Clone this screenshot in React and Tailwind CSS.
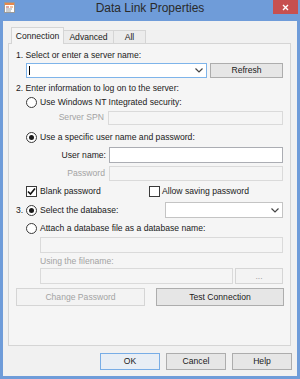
const font = { fontFamily: '"Liberation Sans", Arial, sans-serif' };

function Radio({ checked }) {
  return (
    <span className="w-[11px] h-[11px] rounded-full border border-[#3a3a3a] bg-white flex items-center justify-center shrink-0">
      {checked && <span className="w-[5px] h-[5px] rounded-full bg-[#1a1a1a]" />}
    </span>
  );
}

function Checkbox({ checked }) {
  return (
    <span className="w-[11px] h-[11px] border border-[#3a3a3a] bg-white flex items-center justify-center shrink-0">
      {checked && (
        <svg width="9" height="9" viewBox="0 0 9 9">
          <polyline points="1,4.5 3.5,7 8,1.5" fill="none" stroke="#111" strokeWidth="1.6" />
        </svg>
      )}
    </span>
  );
}

function Chevron() {
  return (
    <svg width="8" height="5" viewBox="0 0 8 5" className="shrink-0">
      <polyline points="0.5,0.5 4,4 7.5,0.5" fill="none" stroke="#444" strokeWidth="1.2" />
    </svg>
  );
}

function Button({ children, disabled, primary, className = '' }) {
  let tone = 'border-[#adadad] bg-[#e6e6e6] text-[#1a1a1a]';
  if (disabled) tone = 'border-[#d5d5d5] bg-[#f3f3f3] text-[#a3a3a3]';
  if (primary) tone = 'border-[#78ade6] bg-[#e8eef5] text-[#1a1a1a]';
  return (
    <div className={`border flex items-center justify-center leading-[13px] ${tone} ${className}`}>
      {children}
    </div>
  );
}

function TitleIcon() {
  return (
    <svg width="11" height="11" viewBox="0 0 11 11">
      <rect x="0.5" y="0.5" width="10" height="10" fill="#ffffff" stroke="#9a9a9a" />
      <rect x="1" y="1" width="9" height="2" fill="#e8874a" />
      <rect x="2" y="4.5" width="3" height="1" fill="#c0504d" />
      <rect x="2" y="6.5" width="6" height="1" fill="#a0a0a0" />
      <rect x="2" y="8.5" width="5" height="1" fill="#a0a0a0" />
      <rect x="6" y="4.5" width="3" height="1" fill="#e8874a" />
    </svg>
  );
}

export default function App() {
  return (
    <div
      className="w-[300px] h-[379px] bg-[#6f9cd9] flex flex-col text-[8.6px] text-[#1a1a1a] overflow-hidden"
      style={font}
    >
      {/* Title bar */}
      <div className="h-[21px] shrink-0 grid grid-cols-[1fr_auto_1fr]">
        <div className="pl-[4px] pt-[2px]">
          <TitleIcon />
        </div>
        <span className="text-[12px] leading-[14px] mt-[1px] text-[#2a2a2a]">Data Link Properties</span>
        <div className="flex justify-end pr-[2px]">
          <div className="w-[25px] h-[14px] bg-[#c75050] flex items-center justify-center">
            <svg width="7" height="7" viewBox="0 0 7 7">
              <path d="M1 1 L6 6 M6 1 L1 6" stroke="#fff" strokeWidth="1.4" />
            </svg>
          </div>
        </div>
      </div>

      {/* Client area */}
      <div className="flex-1 mx-[3px] mb-[3px] bg-[#f1f1f1] flex flex-col">
        {/* Tabs */}
        <div className="mt-[6px] h-[17px] -mb-px relative z-10 flex items-end pl-[8px]">
          <div className="w-[53px] h-[17px] border border-b-0 border-[#d5d5d5] bg-[#f5f5f5] flex items-center justify-center leading-[13px]">
            Connection
          </div>
          <div className="w-[50px] h-[14px] border border-l-0 border-[#d5d5d5] bg-[#ececec] flex items-center justify-center leading-[13px]">
            Advanced
          </div>
          <div className="w-[32px] h-[14px] border border-l-0 border-[#d5d5d5] bg-[#ececec] flex items-center justify-center leading-[13px]">
            All
          </div>
        </div>

        {/* Tab page */}
        <div className="h-[303px] ml-[5px] mr-[6px] border border-[#d5d5d5] bg-[#f5f5f5] flex flex-col pt-[5px] px-[7px] leading-[13px]">
          <div className="h-[13px]">1. Select or enter a server name:</div>

          <div className="mt-[1px] h-[15px] flex pl-[10px] gap-[3px]">
            <div className="w-[181px] border border-[#7eb4ea] bg-white flex items-center pl-[2px] pr-[3px]">
              <span className="w-px h-[9px] bg-black" />
              <span className="flex-1" />
              <Chevron />
            </div>
            <Button className="w-[73px]">Refresh</Button>
          </div>

          <div className="mt-[4px] h-[13px]">2. Enter information to log on to the server:</div>

          <div className="mt-[1px] h-[13px] flex items-center pl-[10px] gap-[3px]">
            <Radio />
            <span>Use Windows NT Integrated security:</span>
          </div>

          <div className="mt-[2px] h-[14px] flex">
            <span className="w-[88px] text-right text-[#a3a3a3]">Server SPN</span>
            <div className="ml-[4px] flex-1 border border-[#dadada]" />
          </div>

          <div className="mt-[6px] h-[13px] flex items-center pl-[10px] gap-[3px]">
            <Radio checked />
            <span>Use a specific user name and password:</span>
          </div>

          <div className="mt-[3px] h-[16px] flex items-center">
            <span className="w-[90px] text-right">User name:</span>
            <div className="ml-[3px] flex-1 h-full border border-[#abadb3] bg-white" />
          </div>

          <div className="mt-[3px] h-[15px] flex items-center">
            <span className="w-[89px] text-right text-[#a3a3a3]">Password</span>
            <div className="ml-[4px] flex-1 h-full border border-[#dadada]" />
          </div>

          <div className="mt-[4px] h-[13px] flex items-center pl-[10px]">
            <div className="w-[123px] flex items-center gap-[3px]">
              <Checkbox checked />
              <span>Blank password</span>
            </div>
            <div className="flex items-center gap-[2px]">
              <Checkbox />
              <span>Allow saving password</span>
            </div>
          </div>

          <div className="mt-[4px] h-[16px] flex items-center">
            <span className="w-[10px]">3.</span>
            <Radio checked />
            <span className="ml-[3px]">Select the database:</span>
            <div className="ml-auto w-[118px] h-full border border-[#c4c4c4] bg-white flex items-center justify-end pr-[3px]">
              <Chevron />
            </div>
          </div>

          <div className="mt-[4px] h-[13px] flex items-center pl-[10px] gap-[3px]">
            <Radio />
            <span>Attach a database file as a database name:</span>
          </div>

          <div className="mt-[2px] h-[16px] ml-[24px] border border-[#dadada]" />

          <div className="mt-[2px] h-[13px] pl-[24px] text-[#a3a3a3]">Using the filename:</div>

          <div className="h-[16px] flex pl-[24px] gap-[2px]">
            <div className="w-[193px] border border-[#dadada]" />
            <Button disabled className="flex-1">...</Button>
          </div>

          <div className="mt-[4px] h-[18px] flex justify-between">
            <Button disabled className="w-[129px]">Change Password</Button>
            <Button className="w-[128px] -mr-px">Test Connection</Button>
          </div>
        </div>

        {/* Dialog buttons */}
        <div className="mt-[7px] h-[17px] flex justify-end gap-[6px] pr-[5px]">
          <Button primary className="w-[60px]">OK</Button>
          <Button className="w-[60px]">Cancel</Button>
          <Button className="w-[60px]">Help</Button>
        </div>
      </div>
    </div>
  );
}
